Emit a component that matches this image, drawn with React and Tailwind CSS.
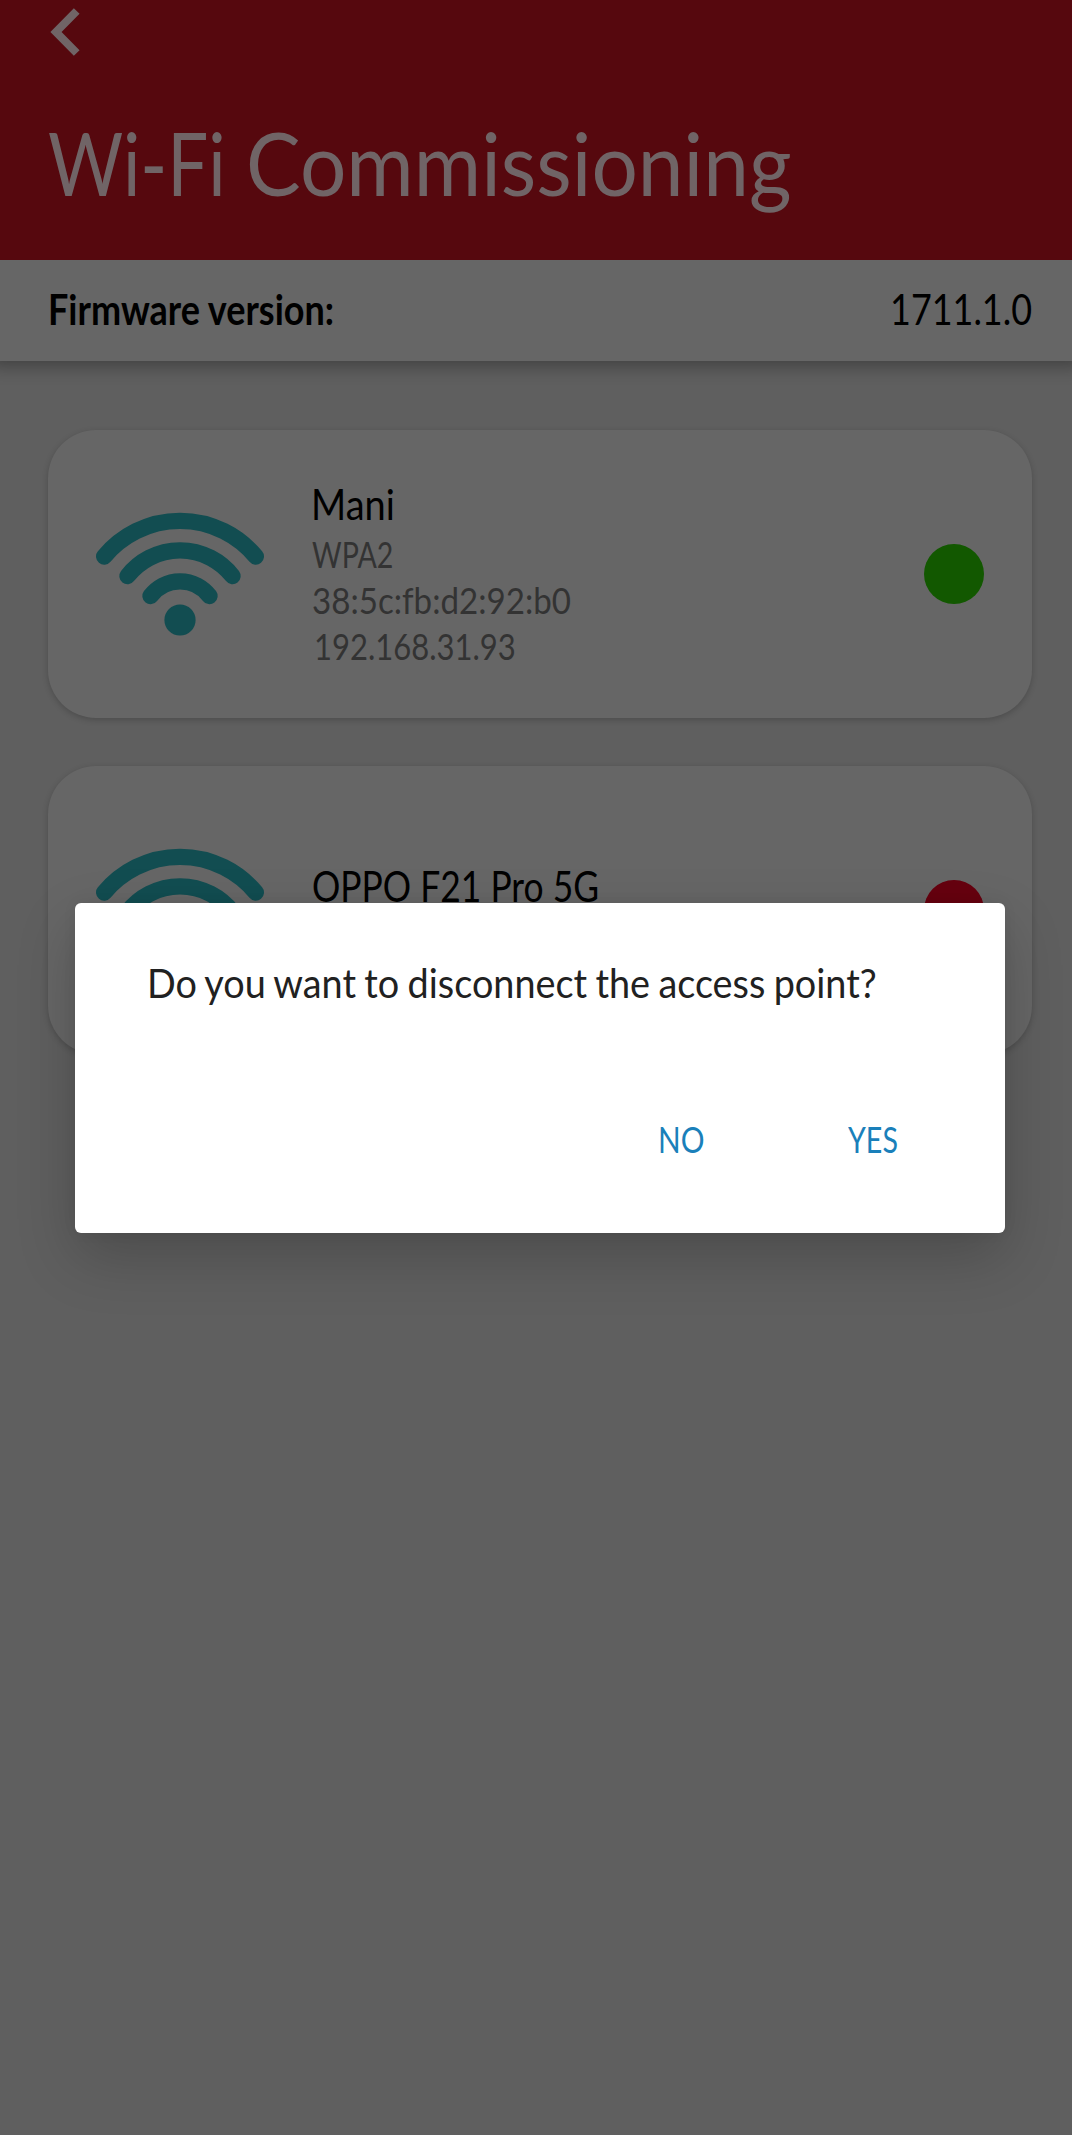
const networks = [
  {
    name: "Mani",
    nameScale: "scale-x-[0.903] ml-[-2px]",
    details: [
      { text: "WPA2", fit: "scale-x-[0.795] ml-[-1px]" },
      { text: "38:5c:fb:d2:92:b0", fit: "scale-x-[0.92] ml-[-1px]" },
      { text: "192.168.31.93", fit: "scale-x-[0.861] ml-px" },
    ],
    block: "pb-[2px]",
    dot: "bg-[#125800]",
  },
  {
    name: "OPPO F21 Pro 5G",
    nameScale: "scale-x-[0.843] ml-[-1px]",
    details: [],
    block: "pb-[48px]",
    dot: "bg-[#66000f]",
  },
];

function BackIcon() {
  return (
    <svg className="block h-16 w-12" viewBox="0 0 48 64" fill="none">
      <path d="M28.7 11 8 32l20.7 21" stroke="#706466" strokeWidth="8" />
    </svg>
  );
}

function WifiIcon() {
  return (
    <svg className="block h-[126px] w-[168px] shrink-0" viewBox="0 0 168 126" fill="none">
      <g stroke="#124d51" strokeWidth="16.4" strokeLinecap="round">
        <path d="M8.2 45.5A98.4 98.4 0 0 1 159.8 45.5" />
        <path d="M31.5 65A66.6 66.6 0 0 1 136.5 65" />
        <path d="M54.5 85A37 37 0 0 1 113.5 85" />
      </g>
      <circle cx="84" cy="109" r="15.6" fill="#124d51" />
    </svg>
  );
}

function NetworkCard({ network }) {
  return (
    <div className="flex h-[288px] items-center rounded-[48px] bg-[#666666] px-12 shadow-[0_2px_6px_rgba(0,0,0,0.2)]">
      <WifiIcon />
      <div className={`ml-[49px] flex flex-1 flex-col items-start ${network.block}`}>
        <div className={`origin-left text-[42px] leading-[54px] whitespace-nowrap text-black ${network.nameScale}`}>
          {network.name}
        </div>
        {network.details.map((d) => (
          <div
            key={d.text}
            className={`origin-left text-[36px] leading-[46px] whitespace-nowrap text-[#333333] ${d.fit}`}
          >
            {d.text}
          </div>
        ))}
      </div>
      <div className={`size-[60px] rounded-full ${network.dot}`} />
    </div>
  );
}

function Dialog() {
  return (
    <div className="absolute top-[903px] left-[75px] h-[330px] w-[930px] rounded-[6px] bg-white pt-[56px] shadow-[0_24px_60px_rgba(0,0,0,0.2),0_0_14px_rgba(0,0,0,0.06)]">
      <p className="ml-[72px] w-max origin-left scale-x-[0.945] text-[40px] leading-[48px] [word-spacing:-1.4px] whitespace-nowrap text-[#212121]">
        Do you want to disconnect the access point?
      </p>
      <div className="mt-[110px] flex gap-[134px] pl-[583px] text-[36px] leading-[44px] text-[#1a80ba]">
        <button className="origin-left scale-x-[0.825]">NO</button>
        <button className="origin-left scale-x-[0.795]">YES</button>
      </div>
    </div>
  );
}

export default function App() {
  return (
    <div className="relative h-[2135px] w-[1072px] overflow-hidden bg-[#5f5f5f] font-['Lato',sans-serif] [font-variant-ligatures:none]">
      <header className="relative h-[260px] bg-[#56080e] pl-12">
        <BackIcon />
        <h1 className="mt-[45px] flex text-[88px] leading-[106px] whitespace-nowrap text-[#706466]">
          <span className="w-[198px] origin-left scale-x-[0.825]">Wi-Fi </span>
          <span className="origin-left scale-x-[0.931]">Commissioning</span>
        </h1>
      </header>
      <div className="flex h-[101px] items-center justify-between bg-[#666666] pr-[40px] pb-[2px] pl-12 text-[42px] text-black shadow-[0_-4px_16px_10px_rgba(0,0,0,0.3)]">
        <span className="origin-left scale-x-[0.857] font-bold">Firmware version:</span>
        <span className="origin-right scale-x-[0.855]">1711.1.0</span>
      </div>
      <main className="flex flex-col gap-12 pt-[69px] pr-10 pl-12">
        {networks.map((n) => (
          <NetworkCard key={n.name} network={n} />
        ))}
      </main>
      <Dialog />
    </div>
  );
}
